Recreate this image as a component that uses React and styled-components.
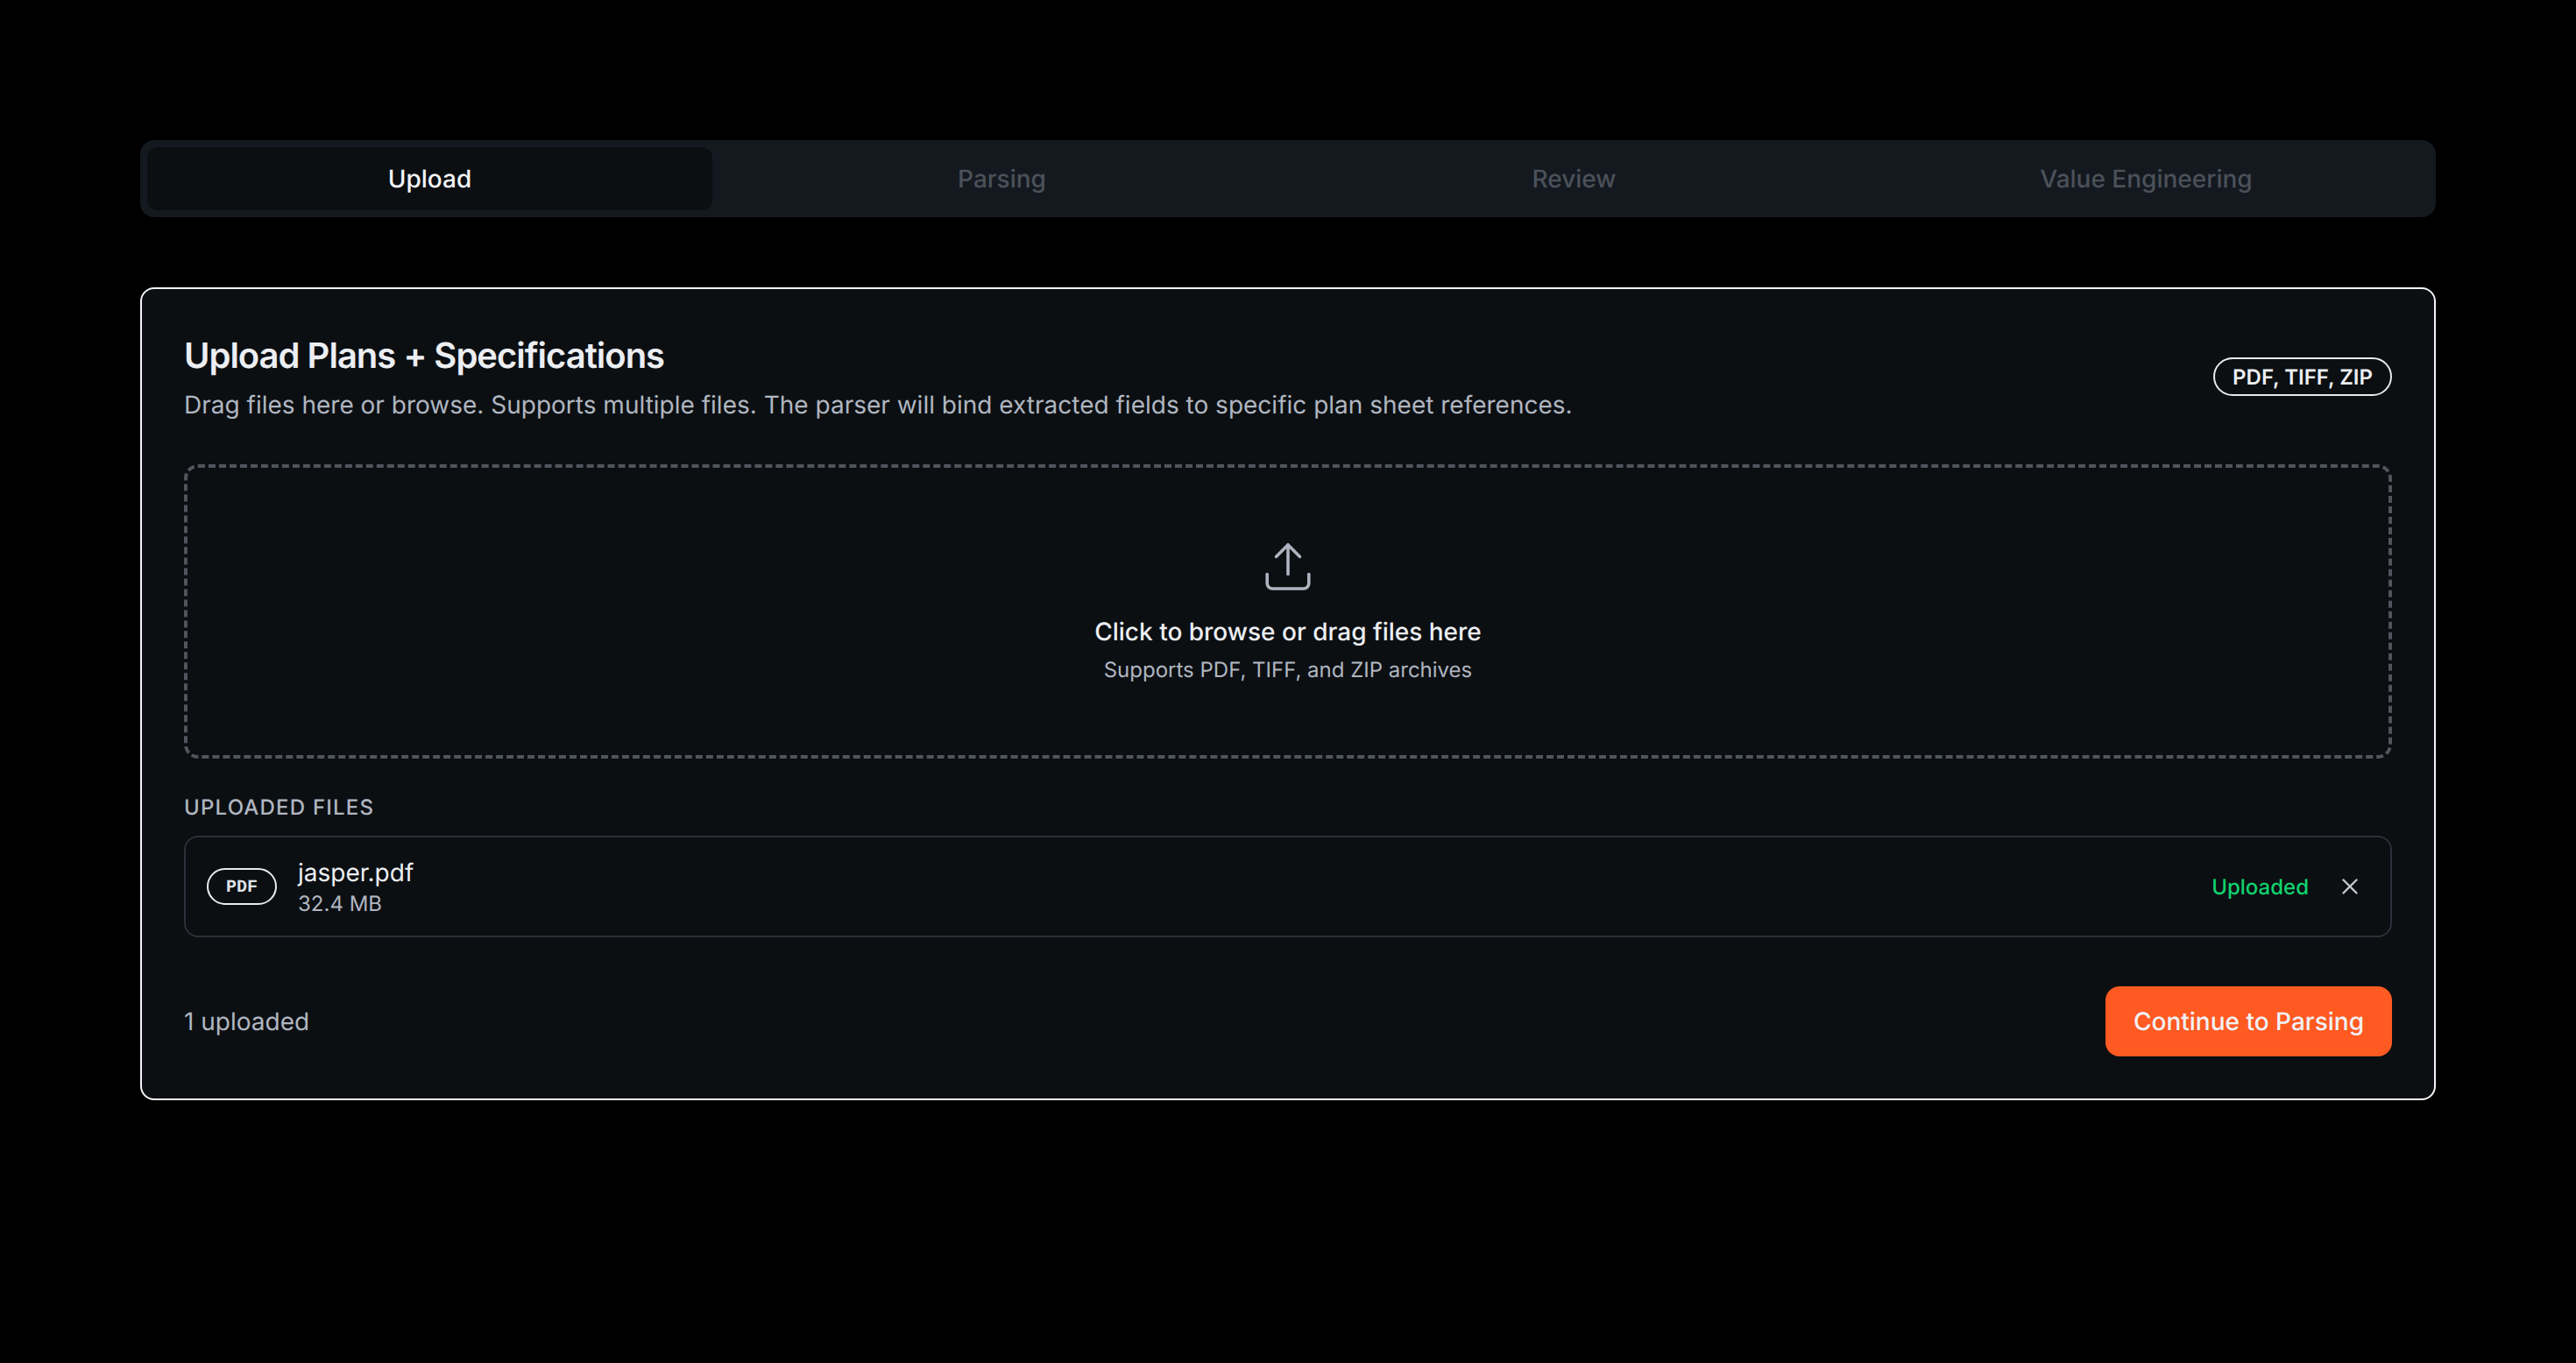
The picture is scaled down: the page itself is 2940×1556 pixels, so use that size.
import React from "react";
import styled, { createGlobalStyle } from "styled-components";

const Global = createGlobalStyle`
  html, body { margin: 0; padding: 0; background: #000; }
  * { box-sizing: border-box; }
  body { font-family: Inter, "Noto Sans", sans-serif; color: #f1f3f6; text-rendering: geometricPrecision; }
`;

const Page = styled.main`
  min-height: 1556px;
  padding: 160px 160px 0;
  background: #000;
`;

const TabBar = styled.nav`
  display: grid;
  grid-template-columns: repeat(4, 1fr);
  gap: 8px;
  height: 88px;
  padding: 8px;
  border-radius: 16px;
  background: #141920;
`;

const Tab = styled.div`
  display: flex;
  align-items: center;
  justify-content: center;
  border-radius: 12px;
  font-size: 28px;
  font-weight: 500;
  background: ${(p) => (p.$active ? "#0b0f12" : "transparent")};
  color: ${(p) => (p.$active ? "#f3f5f8" : "#4b5159")};
`;

const Card = styled.section`
  margin-top: 80px;
  padding: 48px;
  border: 2px solid #f1f3f6;
  border-radius: 16px;
  background: #0b0f12;
`;

const Header = styled.header`
  display: flex;
  align-items: center;
  justify-content: space-between;
`;

const Title = styled.h1`
  margin: 0;
  font-size: 40px;
  line-height: 56px;
  font-weight: 600;
  letter-spacing: -1px;
  color: #eceef2;
`;

const Description = styled.p`
  margin: 8px 0 0;
  font-size: 28px;
  line-height: 40px;
  color: #b0b6c0;
`;

const Pill = styled.span`
  display: inline-flex;
  align-items: center;
  height: 44px;
  padding: 0 20px;
  border: 2px solid #e8eaee;
  border-radius: 22px;
  font-size: 24px;
  font-weight: 600;
  color: #eceef2;
`;

const DropZone = styled.div`
  display: flex;
  flex-direction: column;
  align-items: center;
  height: 336px;
  margin-top: 48px;
  padding-top: 83px;
  border: 4px dashed #50555c;
  border-radius: 16px;
`;

const DropTitle = styled.div`
  margin-top: 24px;
  font-size: 28px;
  line-height: 40px;
  font-weight: 500;
  color: #eceef2;
`;

const DropHint = styled.div`
  margin-top: 8px;
  font-size: 24px;
  line-height: 32px;
  color: #b0b6c0;
`;

const SectionLabel = styled.div`
  margin-top: 40px;
  font-size: 24px;
  line-height: 32px;
  font-weight: 500;
  letter-spacing: 1.2px;
  text-transform: uppercase;
  color: #b0b6c0;
`;

const FileRow = styled.div`
  display: flex;
  align-items: center;
  height: 116px;
  margin-top: 16px;
  padding: 0 24px;
  border: 2px solid #2c3038;
  border-radius: 16px;
`;

const FileBadge = styled.span`
  display: inline-flex;
  align-items: center;
  justify-content: center;
  flex: none;
  width: 80px;
  height: 42px;
  padding-top: 2px;
  border: 2px solid #e8eaee;
  border-radius: 21px;
  font-family: "Liberation Mono", monospace;
  font-size: 20px;
  font-weight: 700;
  color: #dfe2e7;
`;

const FileInfo = styled.div`
  display: flex;
  flex-direction: column;
  margin-left: 24px;
  flex: 1;
`;

const FileName = styled.div`
  font-size: 28px;
  line-height: 40px;
  color: #eceef2;
`;

const FileSize = styled.div`
  font-size: 24px;
  line-height: 32px;
  color: #b0b6c0;
`;

const Status = styled.span`
  font-size: 24px;
  font-weight: 500;
  color: #12d26e;
`;

const Remove = styled.span`
  display: flex;
  margin: 0 10px 0 35px;
  color: #c2c7cf;
`;

const Footer = styled.footer`
  display: flex;
  align-items: center;
  justify-content: space-between;
  margin-top: 56px;
`;

const Count = styled.span`
  font-size: 28px;
  color: #b0b6c0;
`;

const PrimaryButton = styled.button`
  width: 327px;
  height: 80px;
  border: 0;
  border-radius: 16px;
  background: #ff5a22;
  color: #f0f2f5;
  font-family: inherit;
  font-size: 28px;
  font-weight: 500;
  text-rendering: geometricPrecision;
`;

const UploadIcon = () => (
  <svg width="60" height="60" viewBox="0 0 60 60" fill="none" stroke="#adb4bf" strokeWidth="3.6" strokeLinecap="round" strokeLinejoin="round">
    <path d="M16.5 18.5 30 5l13.5 13.5" />
    <path d="M30 5v33.5" />
    <path d="M6.2 38.5V49a6 6 0 0 0 6 6h35.6a6 6 0 0 0 6-6V38.5" />
  </svg>
);

const CloseIcon = () => (
  <svg width="24" height="24" viewBox="0 0 24 24" fill="none" stroke="currentColor" strokeWidth="2.4" strokeLinecap="round">
    <path d="M4.5 4.5l15 15M19.5 4.5l-15 15" />
  </svg>
);

export default function App() {
  return (
    <Page>
      <Global />
      <TabBar>
        <Tab $active>Upload</Tab>
        <Tab>Parsing</Tab>
        <Tab>Review</Tab>
        <Tab>Value Engineering</Tab>
      </TabBar>
      <Card>
        <Header>
          <div>
            <Title>Upload Plans + Specifications</Title>
            <Description>
              Drag files here or browse. Supports multiple files. The parser will bind extracted fields to specific plan sheet references.
            </Description>
          </div>
          <Pill>PDF, TIFF, ZIP</Pill>
        </Header>
        <DropZone>
          <UploadIcon />
          <DropTitle>Click to browse or drag files here</DropTitle>
          <DropHint>Supports PDF, TIFF, and ZIP archives</DropHint>
        </DropZone>
        <SectionLabel>Uploaded files</SectionLabel>
        <FileRow>
          <FileBadge>PDF</FileBadge>
          <FileInfo>
            <FileName>jasper.pdf</FileName>
            <FileSize>32.4 MB</FileSize>
          </FileInfo>
          <Status>Uploaded</Status>
          <Remove><CloseIcon /></Remove>
        </FileRow>
        <Footer>
          <Count>1 uploaded</Count>
          <PrimaryButton>Continue to Parsing</PrimaryButton>
        </Footer>
      </Card>
    </Page>
  );
}
